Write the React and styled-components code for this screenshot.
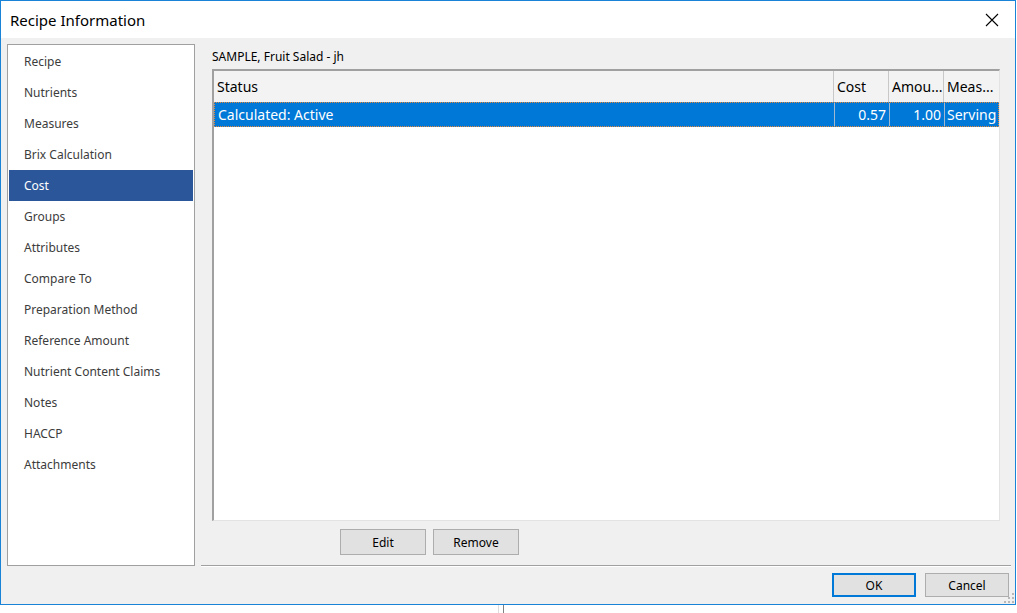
import React from 'react';
import styled, { createGlobalStyle } from 'styled-components';

const GlobalStyle = createGlobalStyle`
  html, body {
    margin: 0;
    padding: 0;
    background: #ffffff;
    overflow: hidden;
  }
  body {
    font-family: "Segoe UI", "Noto Sans", "Open Sans", sans-serif;
  }
`;

const Window = styled.div`
  width: 1016px;
  height: 605px;
  box-sizing: border-box;
  border: 1px solid #1883d7;
  display: flex;
  flex-direction: column;
  background: #f0f0f0;
`;

const TitleBar = styled.div`
  height: 37px;
  background: #ffffff;
  display: flex;
  align-items: center;
  justify-content: space-between;
  padding-left: 9px;
  font-size: 15px;
  color: #000000;
`;

const CloseButton = styled.div`
  width: 46px;
  height: 37px;
  display: flex;
  align-items: center;
  justify-content: center;
`;

const Body = styled.div`
  flex: 1;
  display: flex;
  flex-direction: column;
  padding: 6px 4px 0 6px;
`;

const Main = styled.div`
  display: flex;
  gap: 6px;
  height: 522px;
`;

const NavList = styled.ul`
  list-style: none;
  margin: 0;
  padding: 1px;
  width: 188px;
  box-sizing: border-box;
  background: #ffffff;
  border: 1px solid #a0a0a0;
`;

const NavItem = styled.li`
  height: 31px;
  display: flex;
  align-items: center;
  padding-left: 15px;
  font-size: 12px;
  color: ${(p) => (p.$active ? '#ffffff' : '#3c3c3c')};
  background: ${(p) => (p.$active ? '#2b579a' : 'transparent')};
`;

const Panel = styled.div`
  flex: 1;
  display: flex;
  flex-direction: column;
  padding: 0 11px;
  border-bottom: 1px solid #a0a0a0;
  box-shadow: 0 1px 0 #ffffff;
`;

const Caption = styled.div`
  height: 25px;
  display: flex;
  align-items: center;
  font-size: 12px;
  color: #000000;
`;

const ListView = styled.div`
  height: 452px;
  box-sizing: border-box;
  background: #ffffff;
  border-style: solid;
  border-width: 2px 1px 1px 2px;
  border-color: #a0a0a0 #e3e3e3 #e3e3e3 #a0a0a0;
  display: flex;
  flex-direction: column;
`;

const Row = styled.div`
  display: grid;
  grid-template-columns: 619px 55px 55px 1fr;
  height: ${(p) => (p.$header ? '31px' : '25px')};
  box-sizing: border-box;
  font-size: 14px;
  color: ${(p) => (p.$selected ? '#ffffff' : '#000000')};
  background: ${(p) => (p.$header ? '#f3f3f3' : p.$selected ? '#0078d7' : 'transparent')};
  border: ${(p) => (p.$selected ? '1px dotted #e8893a' : 'none')};
`;

const Cell = styled.div`
  display: flex;
  align-items: center;
  justify-content: ${(p) => (p.$right ? 'flex-end' : 'flex-start')};
  padding: 0 ${(p) => (p.$tight ? 0 : 3)}px 0 ${(p) => (p.$tight ? 2 : 3)}px;
  white-space: nowrap;
  overflow: ${(p) => (p.$tight ? 'visible' : 'hidden')};
  border-left: ${(p) => (p.$first ? 'none' : `1px solid ${p.$line}`)};
`;

const ListActions = styled.div`
  display: flex;
  gap: 7px;
  padding: 8px 0 0 128px;
`;

const Button = styled.button`
  width: ${(p) => p.$w || 86}px;
  height: ${(p) => p.$h || 26}px;
  box-sizing: border-box;
  background: #e1e1e1;
  border: ${(p) => (p.$default ? '2px solid #0078d7' : '1px solid #adadad')};
  font-family: inherit;
  font-size: 12px;
  color: #000000;
  padding: 0;
`;

const Footer = styled.div`
  flex: 1;
  display: flex;
  justify-content: flex-end;
  align-items: flex-start;
  gap: 9px;
  padding: 7px 2px 0 0;
  position: relative;
`;

const Grip = styled.svg`
  position: absolute;
  right: -3px;
  bottom: 1px;
`;

const Desktop = styled.div`
  height: 8px;
  display: flex;
  padding-left: 498px;
  gap: 4px;
`;

const DesktopLine = styled.div`
  width: 1px;
  background: ${(p) => p.$color};
`;

const navItems = [
  'Recipe',
  'Nutrients',
  'Measures',
  'Brix Calculation',
  'Cost',
  'Groups',
  'Attributes',
  'Compare To',
  'Preparation Method',
  'Reference Amount',
  'Nutrient Content Claims',
  'Notes',
  'HACCP',
  'Attachments',
];

export default function App() {
  return (
    <>
      <GlobalStyle />
      <Window>
        <TitleBar>
          <span>Recipe Information</span>
          <CloseButton>
            <svg width="14" height="14" viewBox="0 0 14 14">
              <path d="M1 1 L13 13 M13 1 L1 13" stroke="#000" strokeWidth="1.1" />
            </svg>
          </CloseButton>
        </TitleBar>
        <Body>
          <Main>
            <NavList>
              {navItems.map((item) => (
                <NavItem key={item} $active={item === 'Cost'}>
                  {item}
                </NavItem>
              ))}
            </NavList>
            <Panel>
              <Caption>SAMPLE, Fruit Salad - jh</Caption>
              <ListView>
                <Row $header>
                  <Cell $first>Status</Cell>
                  <Cell $line="#c8c8c8">Cost</Cell>
                  <Cell $line="#c8c8c8">Amou...</Cell>
                  <Cell $line="#c8c8c8">Meas...</Cell>
                </Row>
                <Row $selected>
                  <Cell $first>Calculated: Active</Cell>
                  <Cell $right $line="#a0b8d0">0.57</Cell>
                  <Cell $right $line="#a0b8d0">1.00</Cell>
                  <Cell $tight $line="#a0b8d0">Serving</Cell>
                </Row>
              </ListView>
              <ListActions>
                <Button>Edit</Button>
                <Button>Remove</Button>
              </ListActions>
            </Panel>
          </Main>
          <Footer>
            <Button $default $w={84} $h={24}>OK</Button>
            <Button $w={84} $h={24}>Cancel</Button>
            <Grip width="10" height="10" viewBox="0 0 10 10">
              <rect x="8" y="0" width="2" height="2" fill="#b8b8b8" />
              <rect x="4" y="4" width="2" height="2" fill="#b8b8b8" />
              <rect x="8" y="4" width="2" height="2" fill="#b8b8b8" />
              <rect x="0" y="8" width="2" height="2" fill="#b8b8b8" />
              <rect x="4" y="8" width="2" height="2" fill="#b8b8b8" />
              <rect x="8" y="8" width="2" height="2" fill="#b8b8b8" />
            </Grip>
          </Footer>
        </Body>
      </Window>
      <Desktop>
        <DesktopLine $color="#dcdcdc" />
        <DesktopLine $color="#808080" />
      </Desktop>
    </>
  );
}
